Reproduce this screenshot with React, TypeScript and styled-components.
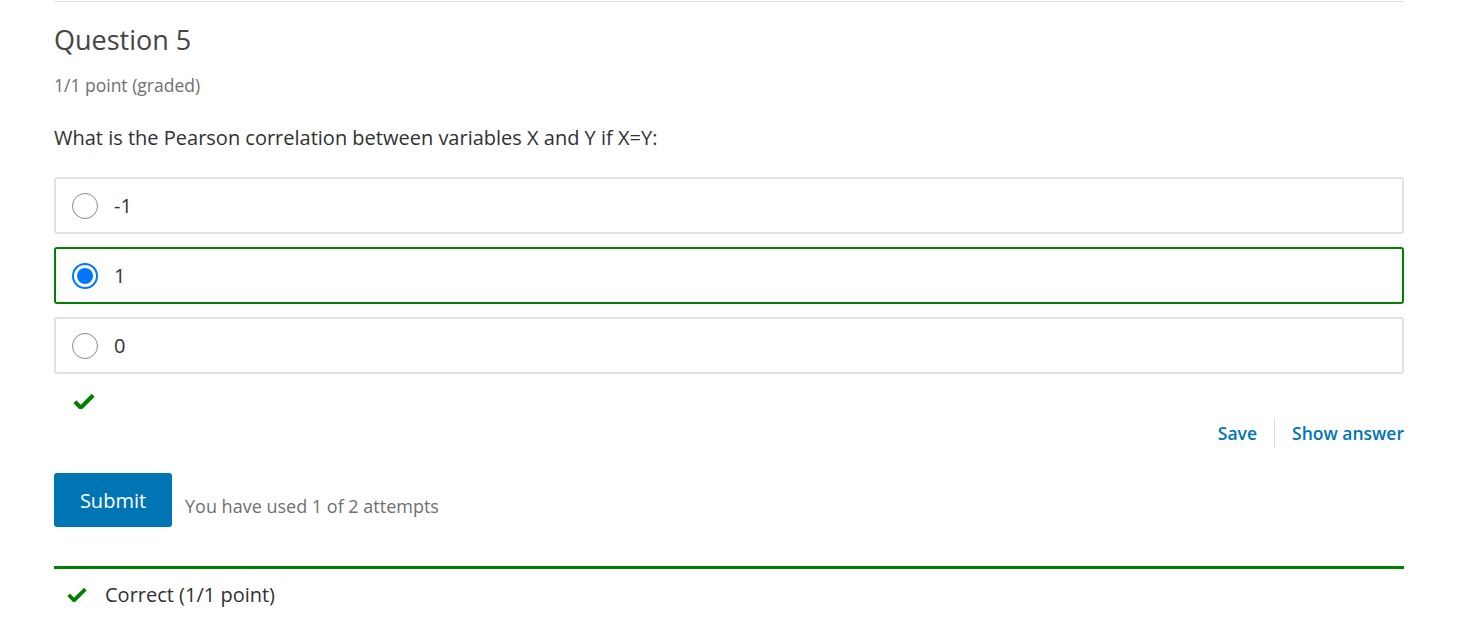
import React from "react";
import styled, { createGlobalStyle } from "styled-components";

const Global = createGlobalStyle`
  html, body { margin: 0; padding: 0; background: #fff; }
  body { font-family: "Open Sans", "Noto Sans", sans-serif; color: #313131; }
`;

const Page = styled.div`
  width: 1350px;
  margin-left: 54px;
  border-top: 1px solid #dddddd;
  margin-top: 1px;
`;

const Title = styled.h3`
  margin: 19px 0 0;
  font-size: 27px;
  font-weight: 400;
  line-height: 38px;
  color: #454545;
`;

const Points = styled.div`
  margin-top: 16px;
  font-size: 17.5px;
  line-height: 20px;
  color: #707070;
`;

const Prompt = styled.p`
  margin: 31px 0 0;
  font-size: 20px;
  line-height: 24px;
  color: #313131;
`;

const Options = styled.div`
  margin-top: 27px;
  display: flex;
  flex-direction: column;
  gap: 13px;
`;

const Option = styled.label<{ $correct?: boolean }>`
  display: flex;
  align-items: center;
  height: 57px;
  box-sizing: border-box;
  padding-left: 16px;
  border: 2px solid ${(p) => (p.$correct ? "#008100" : "#e2e2e2")};
  border-radius: 3px;
  font-size: 20px;
  color: #313131;
`;

const Radio = styled.span<{ $checked?: boolean }>`
  width: 26px;
  height: 26px;
  box-sizing: border-box;
  border-radius: 50%;
  border: ${(p) => (p.$checked ? "2px solid #0075ff" : "1.5px solid #8a8a8a")};
  display: flex;
  align-items: center;
  justify-content: center;
  margin-right: 16px;
  flex: none;
  &::after {
    content: "";
    display: ${(p) => (p.$checked ? "block" : "none")};
    width: 16px;
    height: 16px;
    border-radius: 50%;
    background: #0075ff;
  }
`;

const StatusIcon = styled.div`
  margin: 17px 0 0 19px;
  height: 20px;
  display: flex;
  align-items: center;
`;

const Actions = styled.div`
  display: flex;
  justify-content: flex-end;
  align-items: center;
  margin-top: 7px;
`;

const ActionLink = styled.button`
  background: none;
  border: none;
  padding: 0 0 0 17px;
  font-family: inherit;
  font-size: 17.5px;
  font-weight: 600;
  color: #0075b4;
  cursor: pointer;
  line-height: 24px;
  &:first-child {
    padding-right: 17px;
    border-right: 1px solid #dddddd;
    height: 30px;
  }
`;

const SubmitRow = styled.div`
  margin-top: 25px;
  display: flex;
  align-items: flex-end;
  gap: 13px;
`;

const SubmitButton = styled.button`
  width: 118px;
  height: 54px;
  background: #0075b4;
  border: none;
  border-radius: 3px;
  color: #fff;
  font-family: inherit;
  font-size: 20px;
  padding: 0;
`;

const Attempts = styled.span`
  font-size: 18px;
  color: #707070;
  line-height: 24px;
  margin-bottom: 9px;
`;

const Result = styled.div`
  margin-top: 39px;
  border-top: 3px solid #008100;
  display: flex;
  align-items: center;
  height: 50px;
  padding-left: 13px;
  gap: 18px;
  font-size: 20px;
  color: #313131;
`;

const Check = ({ size = 22 }: { size?: number }) => (
  <svg width={size} height={size * 0.75} viewBox="0 0 24 18">
    <path d="M2 9.5 L8.5 16 L22 2.5" fill="none" stroke="#008100" strokeWidth="4.5" strokeLinecap="butt" strokeLinejoin="miter" />
  </svg>
);

export default function App() {
  return (
    <>
      <Global />
      <Page>
        <Title>Question 5</Title>
        <Points>1/1 point (graded)</Points>
        <Prompt>What is the Pearson correlation between variables X and Y if X=Y:</Prompt>
        <Options>
          <Option>
            <Radio />
            -1
          </Option>
          <Option $correct>
            <Radio $checked />
            1
          </Option>
          <Option>
            <Radio />
            0
          </Option>
        </Options>
        <StatusIcon>
          <Check />
        </StatusIcon>
        <Actions>
          <ActionLink>Save</ActionLink>
          <ActionLink>Show answer</ActionLink>
        </Actions>
        <SubmitRow>
          <SubmitButton>Submit</SubmitButton>
          <Attempts>You have used 1 of 2 attempts</Attempts>
        </SubmitRow>
        <Result>
          <Check size={20} />
          Correct (1/1 point)
        </Result>
      </Page>
    </>
  );
}
